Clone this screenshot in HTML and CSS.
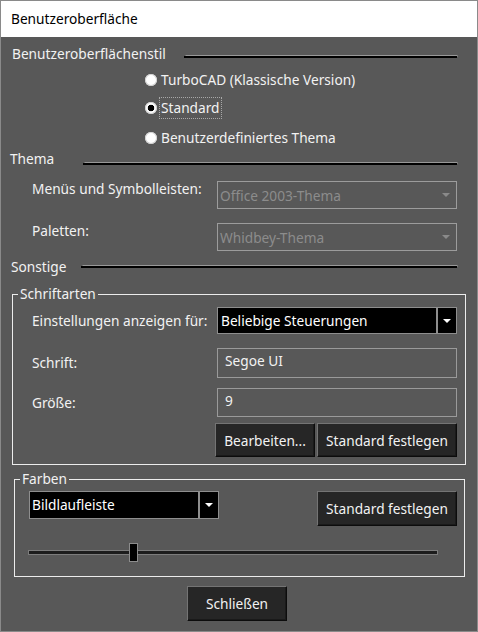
FILE: index.html
```html
<!DOCTYPE html>
<html lang="de">
<head>
<meta charset="utf-8">
<title>Benutzeroberfläche</title>
<link rel="stylesheet" href="styles.css">
</head>
<body>
<div class="window">
  <header class="titlebar">Benutzeroberfläche</header>
  <main class="content">
    <div class="section-head head-style">
      <span class="head-label">Benutzeroberflächenstil</span><span class="head-rule"></span>
    </div>
    <div class="radio-list">
      <div class="radio-row"><span class="radio"></span><span class="radio-label">TurboCAD (Klassische Version)</span></div>
      <div class="radio-row row-gap-s"><span class="radio checked"></span><span class="radio-label focused">Standard</span></div>
      <div class="radio-row row-gap-m"><span class="radio"></span><span class="radio-label">Benutzerdefiniertes Thema</span></div>
    </div>

    <div class="section-head head-theme">
      <span class="head-label">Thema</span><span class="head-rule"></span>
    </div>
    <div class="field-row theme-row first">
      <span class="field-label top">Menüs und Symbolleisten:</span>
      <div class="combo disabled"><span class="combo-value">Office 2003-Thema</span><span class="combo-caret"></span></div>
    </div>
    <div class="field-row theme-row">
      <span class="field-label top">Paletten:</span>
      <div class="combo disabled"><span class="combo-value">Whidbey-Thema</span><span class="combo-caret"></span></div>
    </div>

    <div class="section-head head-misc">
      <span class="head-label">Sonstige</span><span class="head-rule"></span>
    </div>

    <fieldset class="group group-fonts">
      <legend>Schriftarten</legend>
      <div class="group-body fonts-body">
        <div class="field-row">
          <span class="field-label">Einstellungen anzeigen für:</span>
          <div class="combo active">
            <span class="combo-value">Beliebige Steuerungen</span>
            <span class="combo-button"><span class="caret-white"></span></span>
          </div>
        </div>
        <div class="field-row font-row">
          <span class="field-label">Schrift:</span>
          <div class="textbox tall">Segoe UI</div>
        </div>
        <div class="field-row size-row">
          <span class="field-label">Größe:</span>
          <div class="textbox">9</div>
        </div>
        <div class="button-row">
          <button class="btn btn-edit">Bearbeiten...</button>
          <button class="btn btn-default">Standard festlegen</button>
        </div>
      </div>
    </fieldset>

    <fieldset class="group group-colors">
      <legend>Farben</legend>
      <div class="group-body colors-body">
        <div class="colors-top">
          <div class="combo active small">
            <span class="combo-value">Bildlaufleiste</span>
            <span class="combo-button"><span class="caret-white"></span></span>
          </div>
          <button class="btn btn-default tall">Standard festlegen</button>
        </div>
        <div class="slider">
          <div class="slider-track"></div>
          <div class="slider-thumb" style="left: 101px"></div>
        </div>
      </div>
    </fieldset>

    <div class="footer">
      <button class="btn btn-close">Schließen</button>
    </div>
  </main>
</div>
</body>
</html>
```

FILE: styles.css
```css
html, body {
  margin: 0;
  padding: 0;
  background: #585858;
}

body {
  font-family: "Noto Sans", "Open Sans", sans-serif;
  font-size: 13.7px;
  color: #f2f2f2;
}

.window {
  width: 478px;
  height: 632px;
  box-sizing: border-box;
  border: 1px solid #8a8a8a;
  background: #585858;
  display: flex;
  flex-direction: column;
  overflow: hidden;
}

/* title bar */
.titlebar {
  height: 36px;
  line-height: 36px;
  background: #ffffff;
  color: #000000;
  padding-left: 10px;
  flex: none;
}

.content {
  display: flex;
  flex-direction: column;
}

/* section headings with a rule to the right */
.section-head {
  display: flex;
  height: 16px;
  line-height: 16px;
  padding-right: 20px;
}

.head-label {
  flex: none;
  white-space: nowrap;
}

.head-rule {
  flex: 1;
  height: 2px;
  background: #000;
  box-shadow: 1px -1px 0 -0.5px #d8d8d8;
}

.head-style { margin-top: 9px; padding-left: 11px; }
.head-style .head-label { width: 172px; }
.head-style .head-rule { margin-top: 10px; }

.head-theme { margin-top: 0; padding-left: 9px; }
.head-theme .head-label { width: 73px; }
.head-theme .head-rule { margin-top: 12px; }

.head-misc { margin-top: 8px; padding-left: 10px; }
.head-misc .head-label { width: 70px; }
.head-misc .head-rule { margin-top: 7px; }

/* radio buttons */
.radio-list {
  margin-top: 5px;
  padding-left: 144px;
  display: flex;
  flex-direction: column;
}

.radio-row {
  height: 26px;
  display: flex;
  align-items: center;
}

.row-gap-s { margin-top: 2px; }
.row-gap-m { margin-top: 4px; }

.radio {
  width: 12px;
  height: 12px;
  border-radius: 50%;
  background: #ffffff;
  box-shadow: inset 0 0 0 1px #cfcfcf;
  flex: none;
}

.radio.checked {
  background: radial-gradient(circle, #000 0 3px, #fff 3.6px);
}

.radio-label {
  margin-left: 2px;
  padding: 0 1px;
  height: 20px;
  line-height: 20px;
  border: 1px dotted transparent;
  white-space: nowrap;
}

.radio-label.focused {
  border-color: #a8a8a8;
}

/* labelled rows */
.field-row {
  display: flex;
  align-items: center;
}

.theme-row {
  padding-left: 31px;
  align-items: flex-start;
  margin-top: 14px;
}

.field-label {
  width: 185px;
  flex: none;
  line-height: 16px;
  white-space: nowrap;
}

.field-label.top { margin-top: 0; }

/* combo boxes */
.combo {
  width: 240px;
  height: 28px;
  box-sizing: border-box;
  display: flex;
  flex: none;
}

.combo.disabled {
  border: 1px solid #9c9c9c;
  color: #8c8c8c;
  align-items: center;
  padding: 0 6px 0 2px;
}

.combo.disabled .combo-value { flex: 1; }

.combo-caret {
  width: 0;
  height: 0;
  border-left: 4px solid transparent;
  border-right: 4px solid transparent;
  border-top: 4px solid #8a8a8a;
}

.combo.active {
  height: 27px;
}

.combo.active .combo-value {
  flex: 1;
  background: #000;
  border: 1px solid #8e8e8e;
  padding-left: 3px;
  line-height: 25px;
  color: #ffffff;
  white-space: nowrap;
  overflow: hidden;
}

.combo-button {
  width: 20px;
  flex: none;
  box-sizing: border-box;
  background: #000;
  border: 1px solid #8e8e8e;
  display: flex;
  align-items: center;
  justify-content: center;
}

.caret-white {
  width: 0;
  height: 0;
  border-left: 4px solid transparent;
  border-right: 4px solid transparent;
  border-top: 4px solid #ffffff;
}

.combo.small {
  width: 190px;
  height: 28px;
}

.combo.small .combo-value { padding-left: 2px; line-height: 26px; }

/* group boxes */
.group {
  margin: 0;
  padding: 0;
  border: 1px solid #ececec;
  box-sizing: border-box;
  min-width: 0;
}

.group legend {
  margin-left: 5px;
  padding: 0 2px;
  line-height: 16px;
}

.group-fonts {
  margin: 11px 0 0 11px;
  width: 454px;
}

.fonts-body {
  padding: 5px 8px 7px 19px;
}

.textbox {
  width: 240px;
  height: 29px;
  box-sizing: border-box;
  border: 1px solid #9a9a9a;
  padding: 3px 7px 0;
  line-height: 18px;
  flex: none;
}

.textbox.tall { height: 30px; }

.font-row { margin-top: 14px; }
.size-row { margin-top: 10px; }

.button-row {
  display: flex;
  gap: 2px;
  margin-top: 6px;
  padding-left: 183px;
}

/* push buttons */
.btn {
  font: inherit;
  color: #f2f2f2;
  background: #262626;
  border: 1px solid;
  border-color: #747474 #0c0c0c #0c0c0c #747474;
  box-shadow: inset -1px -1px 0 #1a1a1a;
  height: 34px;
  padding: 0;
  box-sizing: border-box;
  flex: none;
}

.btn-edit { width: 100px; }
.btn-default { width: 140px; }
.btn.tall { height: 35px; }

.group-colors {
  margin: 6px 0 0 13px;
  width: 451px;
}

.colors-body {
  padding: 4px 7px 14px 14px;
}

.colors-top {
  display: flex;
  justify-content: space-between;
  align-items: flex-start;
}

/* slider */
.slider {
  position: relative;
  margin: 17px 0 0 -1px;
  width: 410px;
  height: 19px;
  display: flex;
  align-items: center;
}

.slider-track {
  width: 100%;
  height: 5px;
  box-sizing: border-box;
  border: 1px solid #7c7c7c;
  background: #1c1c1c;
}

.slider-thumb {
  position: absolute;
  top: 0;
  width: 9px;
  height: 19px;
  box-sizing: border-box;
  background: #000;
  border: 1px solid #8c8c8c;
}

/* dialog footer */
.footer {
  display: flex;
  justify-content: center;
  padding-right: 4px;
  margin-top: 9px;
}

.btn-close {
  width: 100px;
  height: 35px;
}
```
